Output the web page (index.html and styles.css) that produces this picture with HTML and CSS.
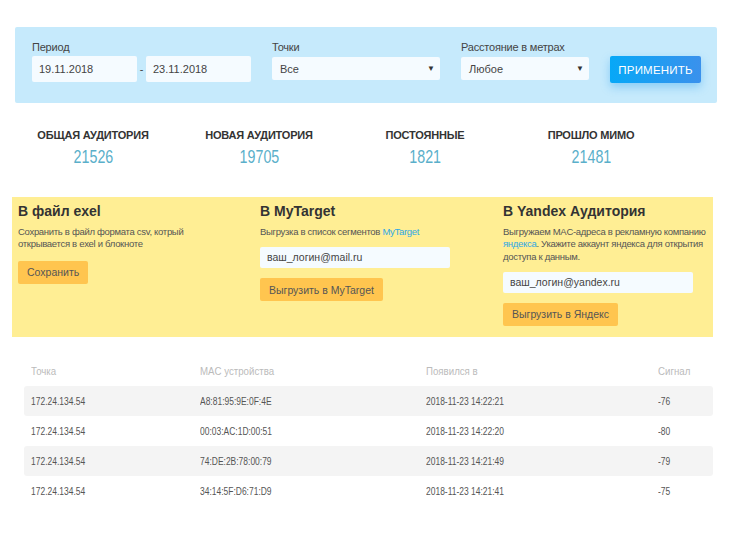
FILE: index.html
```html
<!DOCTYPE html>
<html lang="ru">
<head>
<meta charset="utf-8">
<title>Аудитория</title>
<link rel="stylesheet" href="styles.css">
</head>
<body>
<div class="filters">
  <div class="field">
    <div class="label">Период</div>
    <div class="range">
      <div class="input date">19.11.2018</div>
      <span class="dash">-</span>
      <div class="input date">23.11.2018</div>
    </div>
  </div>
  <div class="field">
    <div class="label">Точки</div>
    <div class="select points"><span>Все</span><span class="arrow">▼</span></div>
  </div>
  <div class="field">
    <div class="label">Расстояние в метрах</div>
    <div class="select distance"><span>Любое</span><span class="arrow">▼</span></div>
  </div>
  <button class="apply">ПРИМЕНИТЬ</button>
</div>

<div class="stats">
  <div class="stat"><div class="stat-title">ОБЩАЯ АУДИТОРИЯ</div><div class="stat-value"><span>21526</span></div></div>
  <div class="stat"><div class="stat-title">НОВАЯ АУДИТОРИЯ</div><div class="stat-value"><span>19705</span></div></div>
  <div class="stat"><div class="stat-title">ПОСТОЯННЫЕ</div><div class="stat-value"><span>1821</span></div></div>
  <div class="stat"><div class="stat-title">ПРОШЛО МИМО</div><div class="stat-value"><span>21481</span></div></div>
</div>

<div class="export">
  <div class="export-col">
    <h3>В файл exel</h3>
    <p>Сохранить в файл формата csv, котрый<br>открывается в exel и блокноте</p>
    <button class="ybtn">Сохранить</button>
  </div>
  <div class="export-col">
    <h3>В MyTarget</h3>
    <p>Выгрузка в список сегментов <a href="#">MyTarget</a></p>
    <div class="email">ваш_логин@mail.ru</div>
    <button class="ybtn">Выгрузить в MyTarget</button>
  </div>
  <div class="export-col">
    <h3>В Yandex Аудитория</h3>
    <p>Выгружаем MAC-адреса в рекламную компанию<br><a href="#">яндекса</a>. Укажите аккаунт яндекса для открытия<br>доступа к данным.</p>
    <div class="email">ваш_логин@yandex.ru</div>
    <button class="ybtn">Выгрузить в Яндекс</button>
  </div>
</div>

<table class="devices">
  <thead>
    <tr><th class="c1"><span>Точка</span></th><th class="c2"><span>MAC устройства</span></th><th class="c3"><span>Появился в</span></th><th class="c4"><span>Сигнал</span></th></tr>
  </thead>
  <tbody>
    <tr><td><span>172.24.134.54</span></td><td><span>A8:81:95:9E:0F:4E</span></td><td><span>2018-11-23 14:22:21</span></td><td><span>-76</span></td></tr>
    <tr><td><span>172.24.134.54</span></td><td><span>00:03:AC:1D:00:51</span></td><td><span>2018-11-23 14:22:20</span></td><td><span>-80</span></td></tr>
    <tr><td><span>172.24.134.54</span></td><td><span>74:DE:2B:78:00:79</span></td><td><span>2018-11-23 14:21:49</span></td><td><span>-79</span></td></tr>
    <tr><td><span>172.24.134.54</span></td><td><span>34:14:5F:D6:71:D9</span></td><td><span>2018-11-23 14:21:41</span></td><td><span>-75</span></td></tr>
  </tbody>
</table>
</body>
</html>
```

FILE: styles.css
```css
* { box-sizing: border-box; }
body {
  margin: 0;
  background: #fff;
  font-family: "Liberation Sans", Arial, sans-serif;
  color: #444;
}

/* Filters */
.filters {
  margin: 27px 22px 0 15px;
  height: 76px;
  background: #c6eafc;
  border-radius: 2px;
  display: flex;
  align-items: flex-start;
  gap: 21px;
  padding: 13px 16px 0 17px;
}
.label {
  font-size: 11px;
  line-height: 14px;
  color: #444;
  height: 16px;
  letter-spacing: -0.2px;
}
.range { display: flex; align-items: center; }
.input {
  background: #f5fbff;
  border-radius: 2px;
  font-size: 11px;
  color: #444;
}
.date {
  width: 105px;
  height: 26px;
  line-height: 26px;
  padding-left: 7px;
}
.dash { width: 9px; text-align: center; font-size: 11px; color: #444; }
.select {
  margin-top: 1px;
  height: 23px;
  background: #f5fbff;
  border-radius: 2px;
  font-size: 11px;
  color: #444;
  display: flex;
  align-items: center;
  justify-content: space-between;
  padding: 0 5px 0 8px;
}
.select .arrow { font-size: 8px; color: #333; }
.points { width: 168px; }
.distance { width: 128px; }
.apply {
  margin-top: 16px;
  width: 92px;
  height: 27px;
  border: 0;
  border-radius: 2px;
  background: linear-gradient(90deg, #07a8f7, #3a91ec);
  color: #fff;
  font-family: "Liberation Sans", Arial, sans-serif;
  font-size: 11.5px;
  letter-spacing: 0.2px;
  box-shadow: 0 4px 10px rgba(20, 150, 235, 0.35);
  padding: 0;
}

/* Stats */
.stats {
  margin: 25px 0 0 10px;
  display: grid;
  grid-template-columns: repeat(4, 166px);
  height: 69px;
}
.stat { text-align: center; }
.stat-title {
  font-size: 11px;
  line-height: 14px;
  font-weight: bold;
  color: #333;
  letter-spacing: -0.2px;
}
.stat-value {
  margin-top: 4px;
  font-size: 19px;
  line-height: 22px;
  color: #5aafca;
}
.stat-value span {
  display: inline-block;
  transform: scaleX(0.75);
}

/* Export */
.export {
  margin-left: 12px;
  width: 701px;
  height: 140px;
  background: #ffee94;
  display: grid;
  grid-template-columns: 242px 243px 210px;
  padding: 6px 0 0 6px;
}
.export-col { min-width: 0; }
.export h3 {
  margin: 0;
  font-size: 14px;
  line-height: 17px;
  font-weight: bold;
  color: #333;
}
.export p {
  margin: 6px 0 0;
  font-size: 9.5px;
  line-height: 12.3px;
  color: #555;
  letter-spacing: -0.3px;
  white-space: nowrap;
}
.export a { color: #2fa8e4; text-decoration: none; }
.email {
  margin-top: 9px;
  width: 190px;
  height: 21px;
  line-height: 21px;
  background: #f5fbff;
  border-radius: 2px;
  padding-left: 7px;
  font-size: 10.5px;
  color: #444;
}
.ybtn {
  display: block;
  margin-top: 10px;
  height: 23px;
  padding: 0 9px;
  border: 0;
  border-radius: 2px;
  background: #ffc54f;
  color: #555;
  font-family: "Liberation Sans", Arial, sans-serif;
  font-size: 10.5px;
}

/* Table */
.devices {
  margin: 18px 0 0 24px;
  width: 689px;
  border-collapse: collapse;
  font-size: 11px;
}
.devices span {
  display: inline-block;
  transform-origin: left center;
  white-space: nowrap;
}
.devices th {
  text-align: left;
  font-weight: normal;
  color: #bbb;
  height: 31px;
  padding: 0 0 0 7px;
}
.devices th span { transform: scaleX(0.88); }
.devices .c1 { width: 169px; }
.devices .c2 { width: 226px; }
.devices .c3 { width: 232px; }
.devices td {
  height: 30px;
  padding: 0 0 0 7px;
  color: #555;
}
.devices td span { transform: scaleX(0.77); }
.devices tbody tr:nth-child(odd) td { background: #f4f4f4; }
.devices tbody tr td:first-child { border-radius: 3px 0 0 3px; }
.devices tbody tr td:last-child { border-radius: 0 3px 3px 0; }
```
